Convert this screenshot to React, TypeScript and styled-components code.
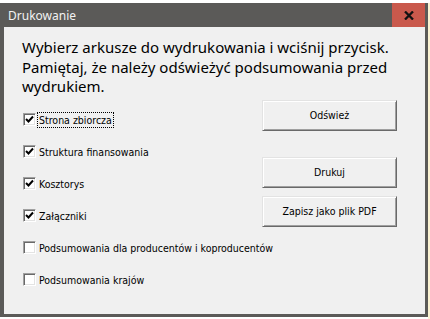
import styled, { createGlobalStyle } from "styled-components";

const GlobalStyle = createGlobalStyle`
  html, body {
    margin: 0;
    padding: 0;
    background: #ffffff;
    overflow: hidden;
  }
`;

const Screen = styled.div`
  width: 430px;
  height: 319px;
  display: flex;
  padding-top: 3px;
  box-sizing: border-box;
  background: #ffffff;
`;

const SideStrip = styled.div`
  flex: 1;
  background: #fbf3d2;
`;

const Window = styled.div`
  width: 428px;
  height: 314px;
  display: flex;
  flex-direction: column;
  box-sizing: border-box;
  padding: 0 3px 3px 4px;
  background: #5b5a58;
`;

const TitleBar = styled.div`
  height: 24px;
  display: flex;
  align-items: center;
  justify-content: space-between;
`;

const Title = styled.span`
  padding-left: 4px;
  font-family: "Noto Sans", sans-serif;
  font-size: 12px;
  color: #f2f2f2;
`;

const CloseButton = styled.div`
  width: 33px;
  height: 24px;
  display: flex;
  align-items: center;
  justify-content: center;
  background: #c9594c;
`;

const Content = styled.div`
  flex: 1;
  background: #f0f0f0;
  padding: 11px 28px 0 18px;
`;

const Heading = styled.p`
  margin: 0;
  font-family: "Noto Sans", sans-serif;
  font-size: 15px;
  line-height: 19.5px;
  color: #000;
`;

const Main = styled.div`
  display: grid;
  grid-template-columns: minmax(0, 1fr) 135px;
  margin-top: 3px;
`;

const List = styled.div`
  display: flex;
  flex-direction: column;
  gap: 12px;
  padding: 10px 0 0 1px;
`;

const Row = styled.label`
  height: 20px;
  display: flex;
  align-items: center;
  gap: 1px;
  white-space: nowrap;
  font-family: "DejaVu Sans Condensed", "DejaVu Sans", sans-serif;
  font-size: 10.5px;
  color: #000;
`;

const Box = styled.span`
  flex: none;
  width: 13px;
  height: 13px;
  box-sizing: border-box;
  display: flex;
  align-items: center;
  justify-content: center;
  background: #fff;
  border: 1px solid;
  border-color: #a0a0a0 #ffffff #ffffff #a0a0a0;
  box-shadow: inset 1px 1px #696969, inset -1px -1px #e3e3e3;
`;

const Label = styled.span<{ $focused?: boolean }>`
  padding: 1px 1px;
  border: 1px dotted ${p => (p.$focused ? "#000" : "transparent")};
`;

const Buttons = styled.div`
  display: flex;
  flex-direction: column;
`;

const Button = styled.button<{ $gap: number }>`
  height: 31px;
  margin-top: ${p => p.$gap}px;
  box-sizing: border-box;
  background: #f0f0f0;
  border: 1px solid;
  border-color: #e3e3e3 #696969 #696969 #e3e3e3;
  box-shadow: inset 1px 1px #ffffff, inset -1px -1px #a0a0a0;
  font-family: "DejaVu Sans Condensed", "DejaVu Sans", sans-serif;
  font-size: 10.5px;
  color: #000;
  padding: 0;
`;

const items = [
  { label: "Strona zbiorcza", checked: true, focused: true },
  { label: "Struktura finansowania", checked: true },
  { label: "Kosztorys", checked: true },
  { label: "Załączniki", checked: true },
  { label: "Podsumowania dla producentów i koprodu\u0063entów", checked: false },
  { label: "Podsumowania krajów", checked: false },
];

const Check = () => (
  <svg width="9" height="9" viewBox="0 0 9 9">
    <polyline points="1,4 3.5,6.5 8,1.5" fill="none" stroke="#000" strokeWidth="2" />
  </svg>
);

const App = () => {
  return (
    <>
      <GlobalStyle />
      <Screen>
        <Window>
          <TitleBar>
            <Title>Drukowanie</Title>
            <CloseButton>
              <svg width="10" height="9" viewBox="0 0 10 9">
                <path d="M1 0.5 L9 8.5 M9 0.5 L1 8.5" stroke="#111" strokeWidth="2.3" />
              </svg>
            </CloseButton>
          </TitleBar>
          <Content>
            <Heading>
              Wybierz arkusze do wydrukowania i wciśnij przycisk.
              <br />
              Pamiętaj, że należy odświeżyć podsumowania przed
              <br />
              wydrukiem.
            </Heading>
            <Main>
              <List>
                {items.map(item => (
                  <Row key={item.label}>
                    <Box>{item.checked && <Check />}</Box>
                    <Label $focused={item.focused}>{item.label}</Label>
                  </Row>
                ))}
              </List>
              <Buttons>
                <Button $gap={0}>Odśwież</Button>
                <Button $gap={26}>Drukuj</Button>
                <Button $gap={8}>Zapisz jako plik PDF</Button>
              </Buttons>
            </Main>
          </Content>
        </Window>
        <SideStrip />
      </Screen>
    </>
  );
};

export default App;
